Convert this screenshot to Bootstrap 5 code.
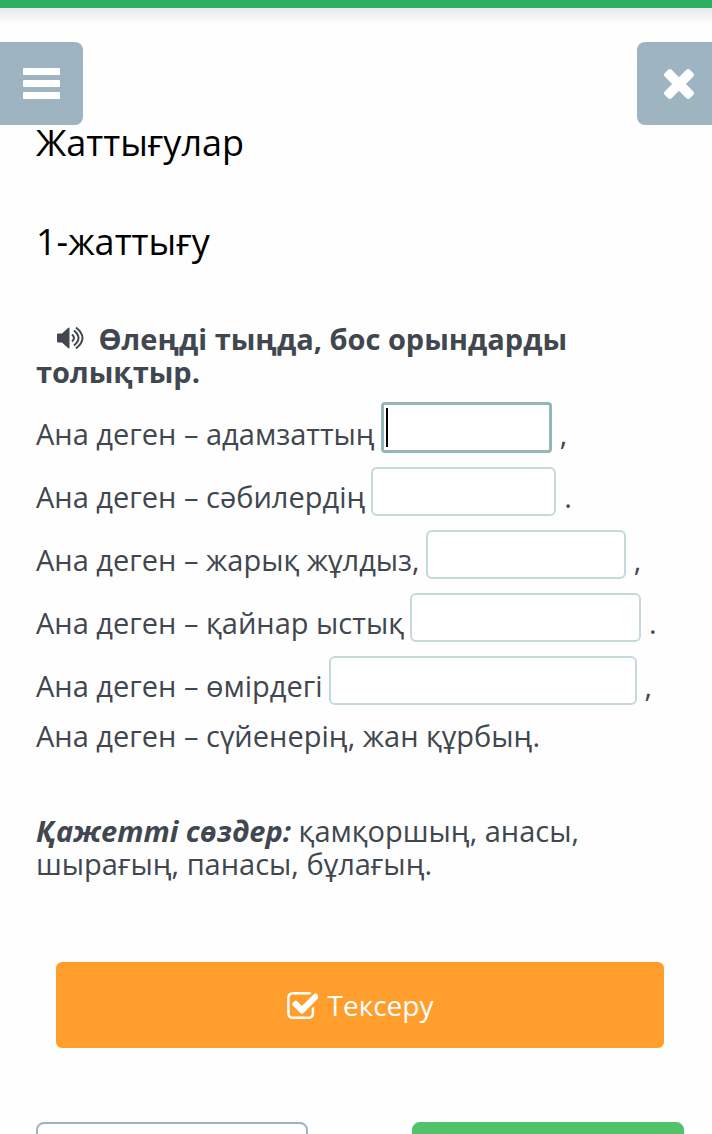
<!DOCTYPE html>
<html lang="kk">
<head>
<meta charset="utf-8">
<meta name="viewport" content="width=device-width, initial-scale=1">
<title>Жаттығулар</title>
<link rel="stylesheet" href="https://cdn.jsdelivr.net/npm/bootstrap@5.3.0/dist/css/bootstrap.min.css">
<style>
  body { font-family: "Open Sans", "Noto Sans", sans-serif; font-size: 29px; line-height: 33px; color: #40474f; background: #fefefe; }
  .page { border-top: 8px solid #2aae60; }
  .page::before { content: ""; display: block; height: 16px; background: linear-gradient(#e6e8e9, #fefefe); }
  .corner-btn { top: 34px; height: 83px; background: #9fb4c1; color: #fff; border: 0; padding: 0; }
  .menu-btn { left: 0; width: 83px; border-radius: 0 8px 8px 0; }
  .close-btn { right: 0; width: 75px; padding-left: 8px; border-radius: 8px 0 0 8px; }
  .lesson { padding: 95px 28px 0 36px; }
  .lesson h1, .lesson h2 { font-size: 36px; line-height: 48px; font-weight: 400; color: #000; margin: 0 0 51px; }
  .lesson h2 { margin-bottom: 56px; }
  .task { font-weight: 700; margin: 0 0 14px; }
  .sound-btn { border: 0; padding: 0; background: none; color: inherit; margin: 0 7px 0 20px; line-height: 1; }
  .poem { display: grid; gap: 14px; }
  .verse { line-height: 38px; }
  .gap-field { height: 49px; border: 2px solid #c5d9da; border-radius: 6px; background-color: #fff; padding: 0 8px; margin: 0 8px 0 6px; min-width: 0; color: inherit; }
  .gap-field.current { height: 51px; border: 3px solid #93b7b7; border-radius: 4px; outline: 0; caret-color: transparent; background: linear-gradient(#000, #000) 2px center / 2px 39px no-repeat #fff; }
  .w-a { width: 171px; } .w-b { width: 185px; } .w-c { width: 200px; } .w-d { width: 231px; } .w-e { width: 308px; }
  .last-verse { margin: 12px 0 0; line-height: 38px; }
  .words { margin: 59px 0 0; }
  .check-btn { margin: 82px 20px 0; height: 86px; background: #ff9e2c; color: #fff; border: 0; border-radius: 6px; gap: 10px; font-size: 28px; }
  .steps { margin-top: 74px; }
  .step-btn { width: 42%; height: 86px; border-radius: 8px; background: #fff; border: 2px solid #9fb4c1; }
  .step-btn.next { background: #52c26a; border-color: #52c26a; }
</style>
</head>
<body>
<main class="page position-relative vh-100 overflow-hidden">
  <button type="button" class="corner-btn menu-btn position-absolute d-flex align-items-center justify-content-center" aria-label="Мәзір">
    <svg width="37" height="31" viewBox="0 0 37 31" fill="currentColor"><rect width="37" height="7" rx="1"/><rect y="12" width="37" height="7" rx="1"/><rect y="24" width="37" height="7" rx="1"/></svg>
  </button>
  <button type="button" class="corner-btn close-btn position-absolute d-flex align-items-center justify-content-center" aria-label="Жабу">
    <svg width="30" height="30" viewBox="302 366 1188 1188" fill="currentColor"><path d="M1490 1322q0 40-28 68l-136 136q-28 28-68 28t-68-28l-294-294-294 294q-28 28-68 28t-68-28l-136-136q-28-28-28-68t28-68l294-294-294-294q-28-28-28-68t28-68l136-136q28-28 68-28t68 28l294 294 294-294q28-28 68-28t68 28l136 136q28 28 28 68t-28 68l-294 294 294 294q28 28 28 68z"/></svg>
  </button>

  <div class="lesson">
    <h1>Жаттығулар</h1>
    <h2>1-жаттығу</h2>
    <p class="task"><button type="button" class="sound-btn" aria-label="Тыңдау"><svg class="d-block" width="28" height="24" viewBox="0 0 28 24"><path d="M1 8.500q0-1 1-1h4l6-5.500q1.500-1 1.500.5v19q0 1.500-1.500.5l-6-5.500h-4q-1 0-1-1z" fill="currentColor"/><path d="M16 8.500q4 3.500 0 7M18 4.500q9 7.500 0 15M20 1.500q13 10.500 0 21" fill="none" stroke="currentColor" stroke-width="2"/></svg></button> Өлеңді тыңда, бос орындарды толықтыр.</p>

    <div class="poem">
      <div class="verse d-flex align-items-end"><label for="g1">Ана деген – адамзаттың</label><input id="g1" type="text" class="gap-field current w-a"><span>,</span></div>
      <div class="verse d-flex align-items-end"><label for="g2">Ана деген – сәбилердің</label><input id="g2" type="text" class="gap-field w-b"><span>.</span></div>
      <div class="verse d-flex align-items-end"><label for="g3">Ана деген – жарық жұлдыз,</label><input id="g3" type="text" class="gap-field w-c"><span>,</span></div>
      <div class="verse d-flex align-items-end"><label for="g4">Ана деген – қайнар ыстық</label><input id="g4" type="text" class="gap-field w-d"><span>.</span></div>
      <div class="verse d-flex align-items-end"><label for="g5">Ана деген – өмірдегі</label><input id="g5" type="text" class="gap-field w-e"><span>,</span></div>
    </div>
    <p class="last-verse">Ана деген – сүйенерің, жан құрбың.</p>
    <p class="words"><em class="fw-bold">Қажетті сөздер:</em> қамқоршың, анасы, шырағың, панасы, бұлағың.</p>

    <div class="d-grid">
      <button type="button" class="check-btn d-flex align-items-center justify-content-center">
        <svg width="31" height="27" viewBox="128 128 1600 1408" fill="currentColor"><path d="M1472 930v318q0 119-84.500 203.500t-203.500 84.500h-832q-119 0-203.500-84.500t-84.500-203.500v-832q0-119 84.500-203.500t203.500-84.500h832q63 0 117 25 15 7 18 23 3 17-9 29l-49 49q-10 10-23 10-3 0-9-2-23-6-45-6h-832q-66 0-113 47t-47 113v832q0 66 47 113t113 47h832q66 0 113-47t47-113v-254q0-13 9-22l64-64q10-10 23-10 6 0 12 3 20 8 20 29zm231-489l-814 814q-24 24-57 24t-57-24l-430-430q-24-24-24-57t24-57l110-110q24-24 57-24t57 24l263 263 647-647q24-24 57-24t57 24l110 110q24 24 24 57t-24 57z" transform="translate(64)"/></svg>
        <span>Тексеру</span>
      </button>
    </div>
    <div class="steps d-flex justify-content-between">
      <button type="button" class="step-btn" aria-label="Артқа"></button>
      <button type="button" class="step-btn next" aria-label="Келесі"></button>
    </div>
  </div>
</main>
<script src="https://cdn.jsdelivr.net/npm/bootstrap@5.3.0/dist/js/bootstrap.bundle.min.js"></script>
</body>
</html>
